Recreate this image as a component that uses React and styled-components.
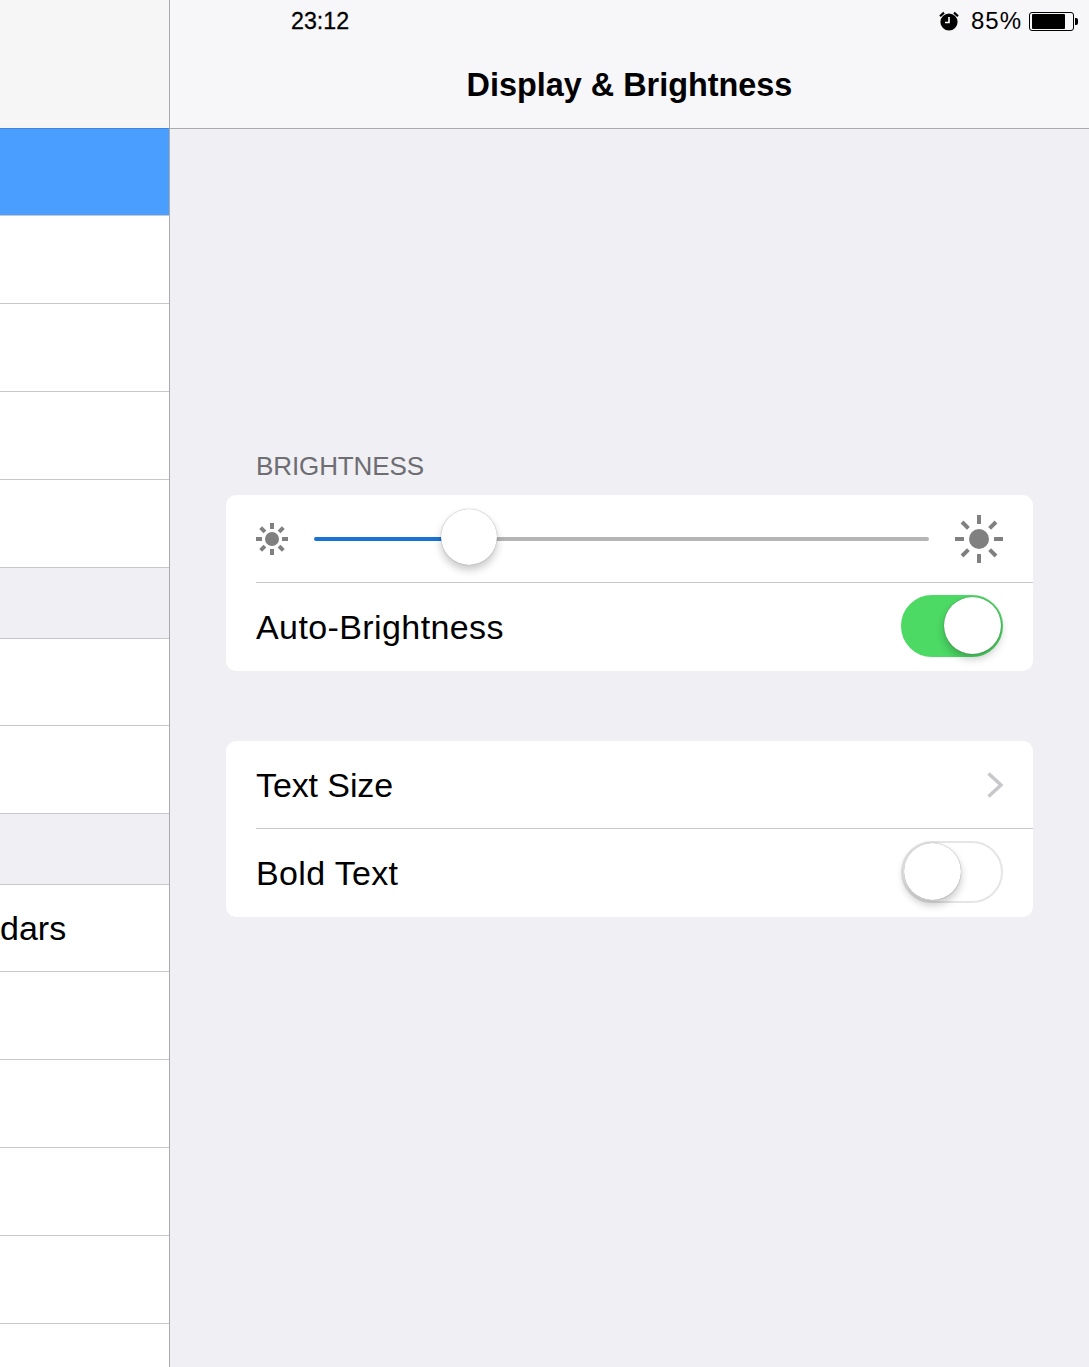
import React from 'react'
import styled, { createGlobalStyle } from 'styled-components'

const GlobalStyle = createGlobalStyle`
  html, body {
    margin: 0;
    padding: 0;
    background: #efeff4;
    font-family: "Liberation Sans", Arial, sans-serif;
    color: #000;
  }
`

const Page = styled.div`
  display: flex;
  width: 1089px;
  height: 1367px;
  overflow: hidden;
`

const Sidebar = styled.div`
  width: 169px;
  flex: none;
  border-right: 1px solid #a9a9ae;
  display: flex;
  flex-direction: column;
  background: #fff;
`

const SidebarHeader = styled.div`
  height: 128px;
  flex: none;
  background: #f6f6f7;
`

const SidebarRow = styled.div`
  height: ${p => p.$h}px;
  flex: none;
  box-sizing: border-box;
  display: flex;
  align-items: center;
  font-size: 34px;
  border-top: 1px solid ${p => (p.$first ? '#3f86d8' : '#c8c7cc')};
  background: ${p => (p.$selected ? '#4a9eff' : p.$gap ? '#efeff4' : '#fff')};
`

const Detail = styled.div`
  flex: 1;
  display: flex;
  flex-direction: column;
  min-width: 0;
`

const NavBar = styled.div`
  height: 128px;
  flex: none;
  box-sizing: border-box;
  background: #f7f7f9;
  display: flex;
  flex-direction: column;
`

const StatusBar = styled.div`
  height: 42px;
  padding: 0 15px 0 121px;
  display: flex;
  align-items: center;
  justify-content: space-between;
  font-size: 24px;
`

const Clock = styled.span`
  font-size: 23.2px;
  -webkit-text-stroke: 0.3px #000;
`

const StatusRight = styled.div`
  display: flex;
  align-items: center;
  gap: 11px;
`

const Percent = styled.span`
  letter-spacing: 1px;
  margin: 0 -4px 0 1px;
`

const Battery = styled.div`
  box-sizing: border-box;
  width: 45px;
  height: 19px;
  border: 1px solid #000;
  border-radius: 3px;
  padding: 1px 2px;
  position: relative;
  &::after {
    content: '';
    position: absolute;
    right: -5px;
    top: 5px;
    width: 3px;
    height: 7px;
    background: #000;
    border-radius: 0 2px 2px 0;
  }
`

const BatteryFill = styled.div`
  height: 100%;
  width: 85%;
  background: #000;
  border-radius: 1px;
`

const Title = styled.div`
  text-align: center;
  font-size: 32.4px;
  font-weight: bold;
  line-height: 39px;
  margin-top: 24px;
`

const Content = styled.div`
  flex: 1;
  border-top: 1px solid #a9a9ae;
  padding: 322px 56px 0;
  background: #efeff4;
`

const SectionLabel = styled.div`
  font-size: 26px;
  line-height: 30px;
  letter-spacing: -0.1px;
  color: #6d6d72;
  padding: 0 0 14px 30px;
`

const Card = styled.div`
  background: #fff;
  border-radius: 10px;
  margin-bottom: 70px;
`

const Row = styled.div`
  height: ${p => (p.$divided ? 89 : 87)}px;
  box-sizing: border-box;
  margin-left: 30px;
  padding-right: 30px;
  display: flex;
  align-items: center;
  justify-content: space-between;
  border-top: ${p => (p.$divided ? '1px solid #c8c7cc' : 'none')};
`

const RowLabel = styled.span`
  font-size: 34px;
  letter-spacing: ${p => p.$spacing || 0}px;
  margin-top: ${p => p.$drop || 0}px;
`

const SliderRow = styled(Row)`
  gap: 26px;
`

const Track = styled.div`
  flex: 1;
  height: 4px;
  border-radius: 2px;
  position: relative;
  background: linear-gradient(to right, #1a73d4 0 155px, #b5b5b5 155px);
`

const Thumb = styled.div`
  position: absolute;
  top: -28px;
  left: 127px;
  width: 56px;
  height: 56px;
  border-radius: 50%;
  background: #fff;
  box-shadow: 0 0 1px rgba(0, 0, 0, 0.45), 0 5px 8px rgba(0, 0, 0, 0.22);
`

const Switch = styled.div`
  width: 102px;
  height: 62px;
  margin-top: -3px;
  box-sizing: border-box;
  border-radius: 31px;
  position: relative;
  background: ${p => (p.$on ? '#4cd964' : '#fff')};
  border: 2px solid ${p => (p.$on ? '#4cd964' : '#e5e5e5')};
`

const Knob = styled.div`
  position: absolute;
  top: 0;
  left: ${p => (p.$on ? '41px' : '1px')};
  width: 57px;
  height: 57px;
  border-radius: 50%;
  background: #fff;
  box-shadow: 0 0 1px rgba(0, 0, 0, 0.55), 0 5px 8px rgba(0, 0, 0, 0.22);
`

const Chevron = styled.svg`
  display: block;
`

const AlarmIcon = () => (
  <svg width="20" height="20" viewBox="0 0 20 20">
    <circle cx="10" cy="11" r="8.6" fill="#000" />
    <path d="M10 6v5.5H6" fill="none" stroke="#fff" strokeWidth="1.6" />
    <path d="M1 5.2 5 1.6M19 5.2 15 1.6" stroke="#000" strokeWidth="2.2" />
  </svg>
)

const SunIcon = ({ size, core, ray, width }) => {
  const c = size / 2
  const rays = [0, 45, 90, 135, 180, 225, 270, 315]
  return (
    <svg width={size} height={size} viewBox={`0 0 ${size} ${size}`} style={{ flex: 'none' }}>
      <circle cx={c} cy={c} r={core} fill="#808080" />
      {rays.map(a => (
        <rect
          key={a}
          x={c - width / 2}
          y={0}
          width={width}
          height={ray}
          fill="#808080"
          transform={`rotate(${a} ${c} ${c})`}
        />
      ))}
    </svg>
  )
}

const sidebarRows = [
  { h: 87, selected: true, first: true },
  { h: 88 },
  { h: 88 },
  { h: 88 },
  { h: 88 },
  { h: 71, gap: true },
  { h: 87 },
  { h: 88 },
  { h: 71, gap: true },
  { h: 87, text: 'dars' },
  { h: 88 },
  { h: 88 },
  { h: 88 },
  { h: 88 },
  { h: 44 },
]

export default function App() {
  return (
    <>
      <GlobalStyle />
      <Page>
        <Sidebar>
          <SidebarHeader />
          {sidebarRows.map((r, i) => (
            <SidebarRow key={i} $h={r.h} $selected={r.selected} $gap={r.gap} $first={r.first}>
              {r.text}
            </SidebarRow>
          ))}
        </Sidebar>
        <Detail>
          <NavBar>
            <StatusBar>
              <Clock>23:12</Clock>
              <StatusRight>
                <AlarmIcon />
                <Percent>85%</Percent>
                <Battery>
                  <BatteryFill />
                </Battery>
              </StatusRight>
            </StatusBar>
            <Title>Display &amp; Brightness</Title>
          </NavBar>
          <Content>
            <SectionLabel>BRIGHTNESS</SectionLabel>
            <Card>
              <SliderRow>
                <SunIcon size={32} core={7} ray={6} width={4} />
                <Track>
                  <Thumb />
                </Track>
                <SunIcon size={48} core={10} ray={9} width={4} />
              </SliderRow>
              <Row $divided>
                <RowLabel $spacing={0.4}>Auto-Brightness</RowLabel>
                <Switch $on>
                  <Knob $on />
                </Switch>
              </Row>
            </Card>
            <Card>
              <Row>
                <RowLabel $spacing={-0.1} $drop={2}>Text Size</RowLabel>
                <Chevron width="16" height="26" viewBox="0 0 16 26">
                  <path d="M1.5 1.5 14 13 1.5 24.5" fill="none" stroke="#c7c7cc" strokeWidth="3.6" />
                </Chevron>
              </Row>
              <Row $divided>
                <RowLabel $spacing={0.35}>Bold Text</RowLabel>
                <Switch>
                  <Knob />
                </Switch>
              </Row>
            </Card>
          </Content>
        </Detail>
      </Page>
    </>
  )
}
